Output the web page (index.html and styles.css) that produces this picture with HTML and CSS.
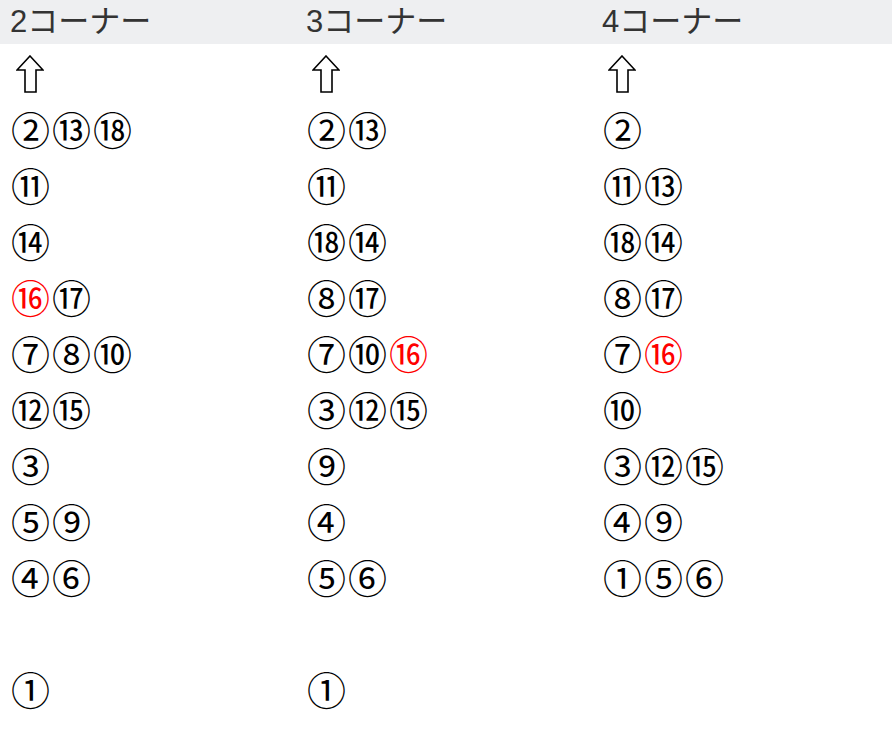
FILE: index.html
```html
<!DOCTYPE html>
<html lang="ja">
<head>
<meta charset="utf-8">
<link rel="stylesheet" href="styles.css">
</head>
<body>
<div class="table">
  <div class="head">
    <div class="hcell">2コーナー</div>
    <div class="hcell">3コーナー</div>
    <div class="hcell">4コーナー</div>
  </div>
  <div class="body">
    <div class="col">
      <div class="row arrow-row"><svg class="arrow" width="28" height="38" viewBox="0 0 28 38"><polygon points="14,1 27,15 20,15 20,37 9,37 9,15 1,15" fill="#fff" stroke="#000" stroke-width="1.6" stroke-linejoin="miter"/></svg></div>
      <div class="row">②⑬⑱</div>
      <div class="row">⑪</div>
      <div class="row">⑭</div>
      <div class="row"><span class="red">⑯</span>⑰</div>
      <div class="row">⑦⑧⑩</div>
      <div class="row">⑫⑮</div>
      <div class="row">③</div>
      <div class="row">⑤⑨</div>
      <div class="row">④⑥</div>
      <div class="row"></div>
      <div class="row">①</div>
    </div>
    <div class="col">
      <div class="row arrow-row"><svg class="arrow" width="28" height="38" viewBox="0 0 28 38"><polygon points="14,1 27,15 20,15 20,37 9,37 9,15 1,15" fill="#fff" stroke="#000" stroke-width="1.6" stroke-linejoin="miter"/></svg></div>
      <div class="row">②⑬</div>
      <div class="row">⑪</div>
      <div class="row">⑱⑭</div>
      <div class="row">⑧⑰</div>
      <div class="row">⑦⑩<span class="red">⑯</span></div>
      <div class="row">③⑫⑮</div>
      <div class="row">⑨</div>
      <div class="row">④</div>
      <div class="row">⑤⑥</div>
      <div class="row"></div>
      <div class="row">①</div>
    </div>
    <div class="col">
      <div class="row arrow-row"><svg class="arrow" width="28" height="38" viewBox="0 0 28 38"><polygon points="14,1 27,15 20,15 20,37 9,37 9,15 1,15" fill="#fff" stroke="#000" stroke-width="1.6" stroke-linejoin="miter"/></svg></div>
      <div class="row">②</div>
      <div class="row">⑪⑬</div>
      <div class="row">⑱⑭</div>
      <div class="row">⑧⑰</div>
      <div class="row">⑦<span class="red">⑯</span></div>
      <div class="row">⑩</div>
      <div class="row">③⑫⑮</div>
      <div class="row">④⑨</div>
      <div class="row">①⑤⑥</div>
    </div>
  </div>
</div>
</body>
</html>
```
FILE: styles.css
```css
html, body { margin: 0; padding: 0; background: #fff; }
.table { width: 892px; }
.head {
  display: grid;
  grid-template-columns: 296px 296px 300px;
  height: 44px;
  background: #eeeff1;
  align-items: center;
}
.hcell {
  padding-left: 10px;
  font-family: "Liberation Sans", "Noto Sans CJK JP", sans-serif;
  font-size: 31px;
  color: #333;
  line-height: 44px;
}
.body {
  display: grid;
  grid-template-columns: 296px 296px 300px;
}
.col { padding-left: 11px; }
.row {
  height: 56px;
  line-height: 56px;
  font-family: "Noto Sans CJK JP", sans-serif;
  font-size: 39px;
  letter-spacing: 2px;
  color: #000;
  white-space: nowrap;
}
.arrow-row {
  display: flex;
  align-items: center;
  padding-left: 5px;
  padding-top: 4px;
  box-sizing: border-box;
}
.arrow { display: block; }
.red { color: #f00; }
```
